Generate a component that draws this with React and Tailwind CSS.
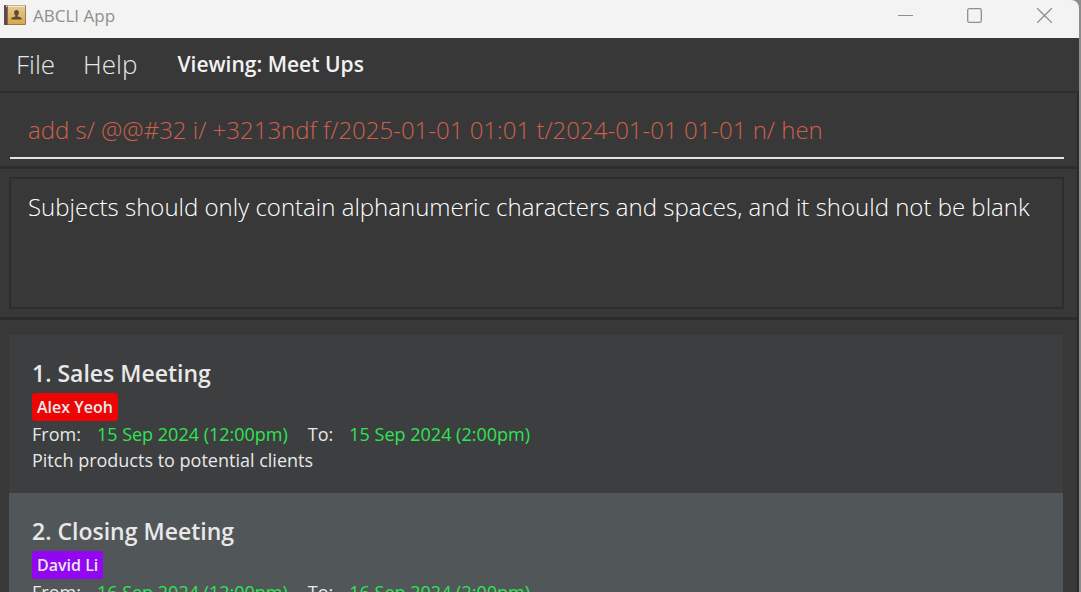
const meetings = [
  {
    id: 1,
    title: "Sales Meeting",
    contact: "Alex Yeoh",
    tag: "bg-[#ed0505]",
    card: "bg-[#3c3e3f]",
    from: "15 Sep 2024 (12:00pm)",
    to: "15 Sep 2024 (2:00pm)",
    note: "Pitch products to potential clients",
  },
  {
    id: 2,
    title: "Closing Meeting",
    contact: "David Li",
    tag: "bg-[#9206f2]",
    card: "bg-[#515658]",
    from: "16 Sep 2024 (12:00pm)",
    to: "16 Sep 2024 (2:00pm)",
  },
];

function BookIcon() {
  return (
    <svg width="22" height="22" viewBox="0 0 22 22" aria-hidden="true">
      <defs>
        <linearGradient id="cover" x1="0" y1="0" x2="0" y2="1">
          <stop offset="0" stopColor="#e6c98f" />
          <stop offset="1" stopColor="#d9a54b" />
        </linearGradient>
      </defs>
      <rect x="0" y="0" width="22" height="20" rx="1" fill="#9a7a4e" />
      <rect x="0" y="0" width="4" height="20" rx="1" fill="#5d4a48" />
      <rect x="2" y="0.500" width="19" height="1.500" fill="#efe6d6" />
      <rect x="4" y="2" width="17" height="17" fill="url(#cover)" />
      <path d="M3.500 1v18" stroke="#8b6a4c" />
      <path
        d="M12.500 5c-1.500 0-2.400 1-2.400 2.600 0 1.200.5 2.100 1.200 2.700v1.200L8.300 12.600c-.7.300-1 .8-1 1.900h10.400c0-1.100-.3-1.600-1-1.900l-3-1.100v-1.200c.7-.6 1.200-1.500 1.200-2.700 0-1.600-.9-2.600-2.400-2.600z"
        fill="#5c4a33"
      />
    </svg>
  );
}

function TitleBar() {
  return (
    <header className="flex h-[38px] shrink-0 items-start justify-between rounded-tr-lg bg-[#f3f3f3] pl-1 text-[#8f8f8f]">
      <div className="flex h-8 items-center gap-[7px]">
        <BookIcon />
        <span className="text-[17px] leading-6">ABCLI App</span>
      </div>
      <div className="flex h-[31px]">
        <button aria-label="Minimize" className="flex w-[68px] items-center justify-center">
          <svg width="15" height="15" viewBox="0 0 15 15" stroke="currentColor">
            <path d="M0 7.500h15" />
          </svg>
        </button>
        <button aria-label="Maximize" className="flex w-[70px] items-center justify-center">
          <svg width="15" height="15" viewBox="0 0 15 15" fill="none" stroke="currentColor" strokeWidth="1.300">
            <rect x=".7" y=".7" width="13.600" height="13.600" rx="1.500" />
          </svg>
        </button>
        <button aria-label="Close" className="flex w-[70px] items-center justify-center">
          <svg width="15" height="15" viewBox="0 0 15 15" stroke="currentColor" strokeWidth="1.300">
            <path d="M0 0l15 15M15 0L0 15" />
          </svg>
        </button>
      </div>
    </header>
  );
}

function MeetingCard({ meeting }) {
  return (
    <li className={`px-[23px] py-5 text-[#e8e8e8] ${meeting.card}`}>
      <h2 className="flex gap-[6px] pb-[2px] text-[23px] leading-9 font-semibold">
        <span>{meeting.id}.</span>
        <span>{meeting.title}</span>
      </h2>
      <div className="flex">
        <span className={`rounded-[3px] px-[5px] text-[16px] leading-7 font-semibold ${meeting.tag}`}>
          {meeting.contact}
        </span>
      </div>
      <dl className="flex text-[18px] leading-[26px]">
        <dt className="mr-4">From:</dt>
        <dd className="mr-5 text-[#2fe552]">{meeting.from}</dd>
        <dt className="mr-4">To:</dt>
        <dd className="text-[#2fe552]">{meeting.to}</dd>
      </dl>
      {meeting.note && <p className="text-[18px] leading-[26px]">{meeting.note}</p>}
    </li>
  );
}

export default function App() {
  return (
    <div className="h-screen overflow-hidden border-r-2 border-[#8c8c8c] bg-[#8c8c8c] font-['Open_Sans','Noto_Sans',sans-serif]">
      <div className="flex h-full flex-col">
        <TitleBar />
        <div className="flex min-h-0 flex-1 flex-col bg-[#383838]">
          <nav className="flex h-[53px] shrink-0 items-center pl-4 text-[#e6e6e6]">
            <button className="mr-7 text-[26px] font-light">File</button>
            <button className="mr-10 text-[26px] font-light">Help</button>
            <span className="text-[21px] font-semibold text-[#f2f2f2]">Viewing: Meet Ups</span>
          </nav>
          <main className="flex min-h-0 flex-1 flex-col border-r-2 border-[#2b2b2b]">
            <section className="shrink-0 border-t-2 border-b-3 border-[#2d2d2d] pt-[9px] pr-[13px] pb-[7px] pl-[10px]">
              <input
                aria-label="Command"
                defaultValue="add s/ @@#32 i/ +3213ndf f/2025-01-01 01:01 t/2024-01-01 01-01 n/ hen"
                className="block h-[57px] w-full border-b-2 border-[#e4e4e4] bg-transparent px-[18px] text-[24px] font-light text-[#d0604c] outline-none"
              />
            </section>
            <section className="shrink-0 border-b-3 border-[#2b2b2b] pt-2 pr-[13px] pb-2 pl-[9px]">
              <output className="block h-[132px] border-2 border-[#2d2d2d] px-[17px] py-[10px] text-[24px] leading-9 font-light whitespace-nowrap text-white">
                Subjects should only contain alphanumeric characters and spaces, and it should not be blank
              </output>
            </section>
            <ul className="min-h-0 flex-1 overflow-hidden pt-[15px] pr-[14px] pl-[9px]">
              {meetings.map((meeting) => (
                <MeetingCard key={meeting.id} meeting={meeting} />
              ))}
            </ul>
          </main>
        </div>
      </div>
    </div>
  );
}
